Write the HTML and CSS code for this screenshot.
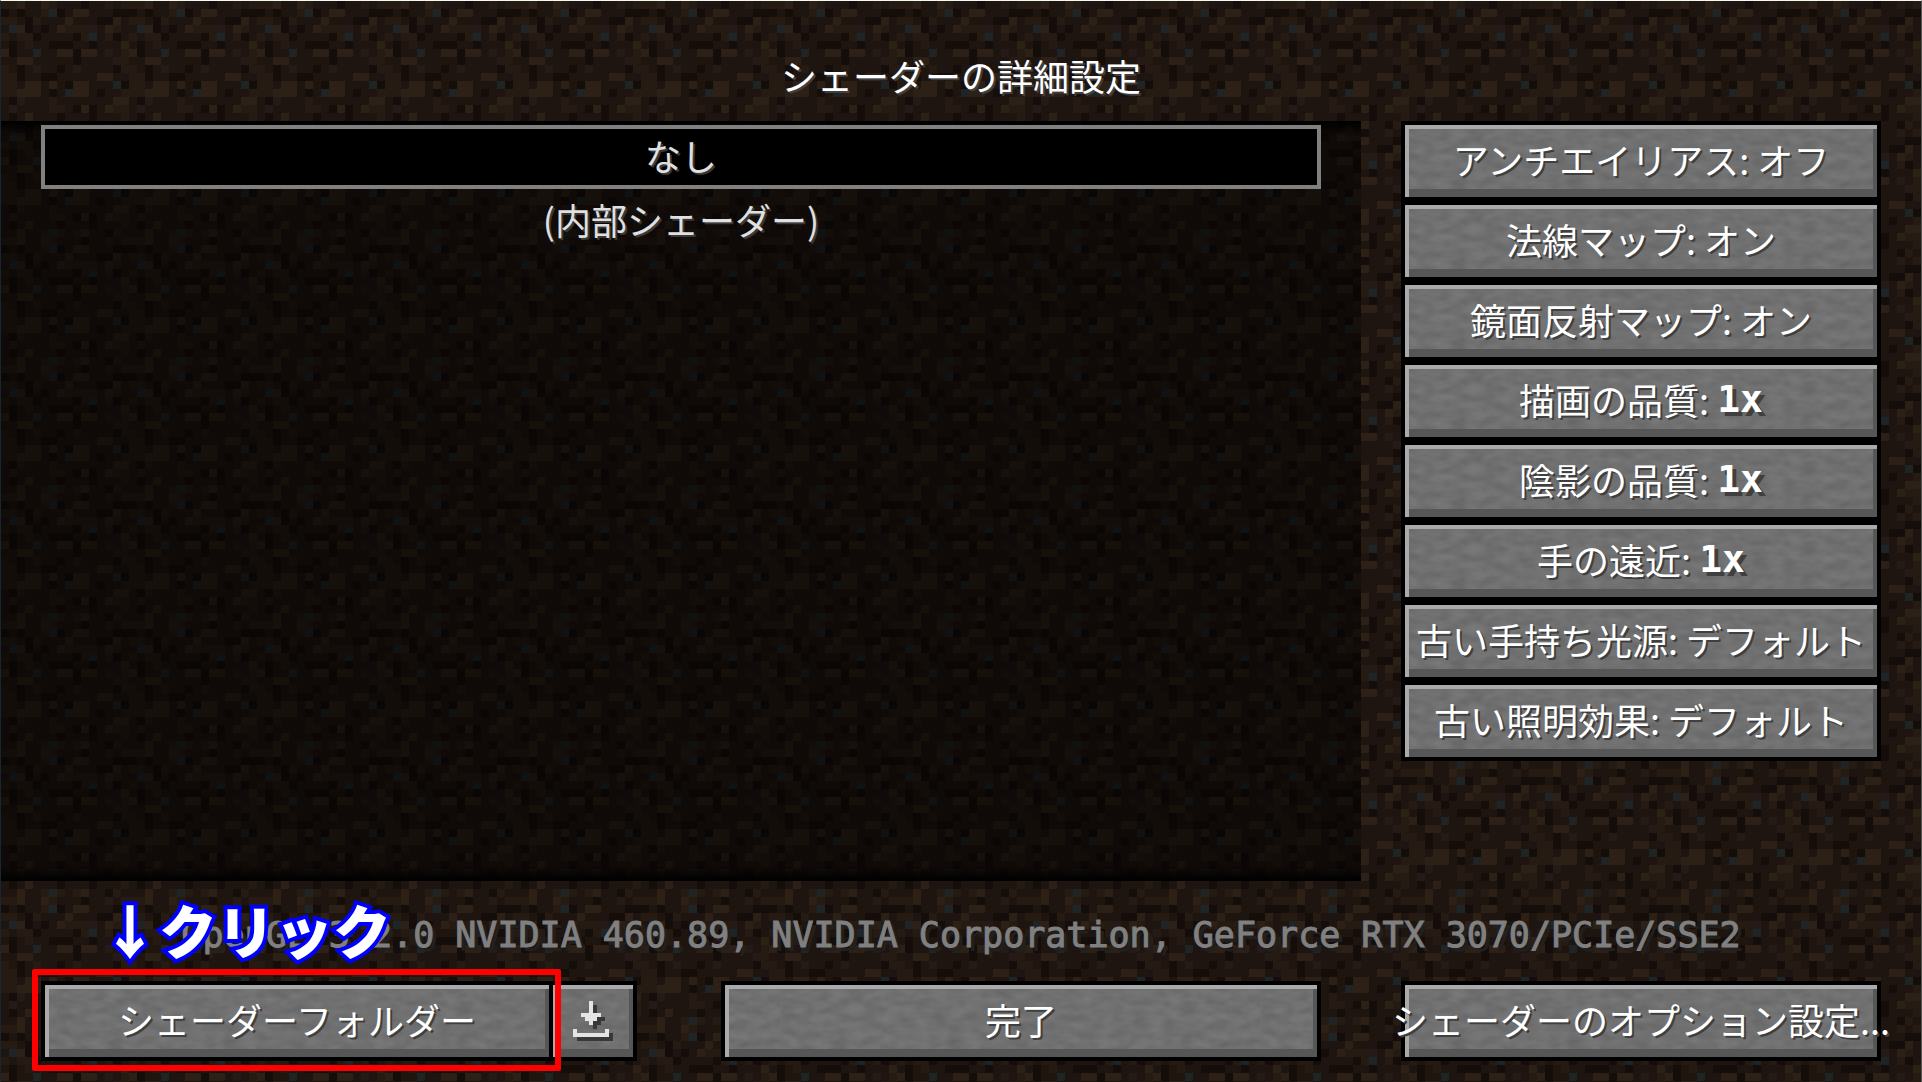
FILE: index.html
```html
<!DOCTYPE html>
<html lang="ja">
<head>
    <meta charset="UTF-8">
    <meta name="viewport" content="width=device-width, initial-scale=1.0">
    <title>シェーダーの詳細設定</title>
    <link rel="stylesheet" href="styles.css">
</head>
<body>
    <div class="screen">
        <header class="header">
            <h1>シェーダーの詳細設定</h1>
        </header>

        <main class="main">
            <div class="shader-list">
                <button type="button" class="shader selected">なし</button>
                <button type="button" class="shader">(内部シェーダー)</button>
            </div>
            <div class="options">
                <button type="button" class="btn">アンチエイリアス: オフ</button>
                <button type="button" class="btn">法線マップ: オン</button>
                <button type="button" class="btn">鏡面反射マップ: オン</button>
                <button type="button" class="btn">描画の品質: <b>1x</b></button>
                <button type="button" class="btn">陰影の品質: <b>1x</b></button>
                <button type="button" class="btn">手の遠近: <b>1x</b></button>
                <button type="button" class="btn">古い手持ち光源: デフォルト</button>
                <button type="button" class="btn">古い照明効果: デフォルト</button>
            </div>
        </main>

        <footer class="footer">
            <p class="status">OpenGL 3.2.0 NVIDIA 460.89, NVIDIA Corporation, GeForce RTX 3070/PCIe/SSE2</p>
            <div class="actions">
                <div class="folder">
                    <button type="button" class="btn btn-folder">シェーダーフォルダー</button>
                    <button type="button" class="btn btn-download" aria-label="ダウンロード">
                        <svg width="40" height="40" viewBox="0 0 10 10" shape-rendering="crispEdges">
                            <path fill="#383838" transform="translate(1 1)" d="M4 0h1v3h2v1h-1v1h-1v1h-1v-1h-1v-1h-1v-1h2zM0 7h1v1h7v-1h1v2h-9z"/>
                            <path fill="#e4e4e4" d="M4 0h1v3h2v1h-1v1h-1v1h-1v-1h-1v-1h-1v-1h2zM0 7h1v1h7v-1h1v2h-9z"/>
                        </svg>
                    </button>
                    <div class="mark"></div>
                    <div class="mark-label">↓クリック</div>
                </div>
                <button type="button" class="btn">完了</button>
                <button type="button" class="btn">シェーダーのオプション設定...</button>
            </div>
        </footer>
    </div>
</body>
</html>
```

FILE: styles.css
```css
:root {
    /* 16x16 dirt tile, one path per colour */
    --dirt: url("data:image/svg+xml,%3Csvg xmlns='http://www.w3.org/2000/svg' width='128' height='128' viewBox='0 0 16 16' shape-rendering='crispEdges'%3E%3Cpath fill='%231f1510' d='M0 0h16v16H0z'/%3E%3Cg fill='none' stroke-width='1'%3E%3Cpath stroke='%23261b12' d='M0 .5h2M6 .5h1M13 .5h1M15 .5h1M5 1.5h1M0 2.5h2M4 2.5h1M8 3.5h3M14 3.5h1M0 4.5h1M2 4.5h2M10 4.5h1M13 4.5h1M3 5.5h1M15 6.5h1M15 7.5h1M0 8.5h1M4 8.5h1M9 8.5h1M15 8.5h1M0 9.5h2M0 10.5h2M0 11.5h2M15 11.5h1M6 12.5h1M6 13.5h2M14 13.5h2M15 14.5h1M5 15.5h1M7 15.5h1M9 15.5h1M14 15.5h1'/%3E%3Cpath stroke='%232d2016' d='M2 .5h1M5 .5h1M9 1.5h2M8 2.5h1M14 2.5h1M2 3.5h1M7 3.5h1M13 3.5h1M15 5.5h1M0 6.5h1M7 6.5h2M10 6.5h2M2 7.5h2M12 9.5h2M3 10.5h2M6 10.5h1M9 10.5h2M2 11.5h3M9 11.5h2M14 12.5h2M10 13.5h1M13 13.5h1M3 14.5h1M2 15.5h1M10 15.5h1'/%3E%3Cpath stroke='%23150d0a' d='M10 .5h1M0 1.5h1M2 1.5h1M7 1.5h1M14 1.5h2M3 2.5h1M12 2.5h2M3 3.5h1M5 3.5h1M4 4.5h1M9 4.5h1M14 4.5h1M1 5.5h1M6 5.5h3M11 5.5h1M1 6.5h1M9 6.5h1M9 7.5h1M2 8.5h1M7 8.5h1M14 8.5h1M2 9.5h1M5 9.5h2M8 10.5h1M15 10.5h1M6 11.5h1M12 11.5h1M1 12.5h1M9 13.5h1M11 13.5h1M1 14.5h1M7 14.5h1M11 14.5h1M13 15.5h1'/%3E%3Cpath stroke='%23251a17' d='M11 3.5h1M13 6.5h1M14 7.5h1M2 12.5h1M1 13.5h1'/%3E%3Cpath stroke='%231f2427' d='M6 1.5h1M1 3.5h1M11 4.5h1M4 6.5h1M14 10.5h1M8 11.5h1M6 15.5h1'/%3E%3C/g%3E%3C/svg%3E");
    /* soft grey noise for the button faces */
    --stone: url("data:image/svg+xml,%3Csvg xmlns='http://www.w3.org/2000/svg' width='480' height='80'%3E%3Cfilter id='n' x='0' y='0' width='1' height='1' color-interpolation-filters='sRGB'%3E%3CfeTurbulence type='fractalNoise' baseFrequency='.06 .12' numOctaves='2' seed='4'/%3E%3CfeColorMatrix values='.1 0 0 0 .39 .1 0 0 0 .39 .1 0 0 0 .39 0 0 0 0 1'/%3E%3C/filter%3E%3Crect width='480' height='80' filter='url(%23n)'/%3E%3C/svg%3E");
}
* {
    box-sizing: border-box;
}
body {
    margin: 0;
    background-color: #1f1510;
    font-family: "Noto Sans CJK JP", sans-serif;
    font-size: 36px;
    color: #fff;
}
.screen {
    display: flex;
    flex-direction: column;
    min-height: 100vh;
    border-top: 1px solid #f4f8f4;
    border-left: 1px solid #1b2530;
    border-right: 1px solid #555;
    background: var(--dirt);
    overflow: hidden;
}
.header {
    height: 120px;
    padding-top: 34px;
}
h1 {
    margin: 0;
    font-size: 36px;
    font-weight: normal;
    line-height: 80px;
    text-align: center;
    text-shadow: 2px 2px #3f3f3f;
}
.main {
    flex: 1;
    display: flex;
    gap: 40px;
    padding-right: 40px;
}
.shader-list {
    flex: 1;
    padding: 4px 40px;
    background:
        linear-gradient(#000, transparent) top / 100% 16px no-repeat,
        linear-gradient(transparent, #000) bottom / 100% 16px no-repeat,
        linear-gradient(rgba(0, 0, 0, 0.5), rgba(0, 0, 0, 0.5)),
        var(--dirt) 0 -12px;
}
.shader {
    display: block;
    width: 100%;
    height: 64px;
    padding: 0 0 4px;
    border: 4px solid transparent;
    background: none;
    color: #e0e0e0;
    font: inherit;
    line-height: 52px;
    text-shadow: 2px 2px #383838;
    cursor: pointer;
}
.shader.selected {
    border-color: #808080;
    background-color: #000;
}
.options {
    width: 480px;
}
.btn {
    display: flex;
    align-items: center;
    justify-content: center;
    width: 100%;
    height: 80px;
    padding: 0 0 4px;
    border: 4px solid #000;
    background: var(--stone) center;
    box-shadow:
        inset 0 4px #aaa,
        inset 4px 0 #aaa,
        inset -4px -8px #565656;
    color: #fff;
    font: inherit;
    line-height: 68px;
    white-space: pre;
    text-shadow: 2px 2px #3f3f3f;
    cursor: pointer;
}
.btn b {
    font-family: "DejaVu Sans Mono", monospace;
    font-size: 38px;
    text-shadow: 4px 4px #3f3f3f;
}
.status {
    margin: 0;
    height: 100px;
    color: #808080;
    font-family: "DejaVu Sans Mono", monospace;
    font-size: 35px;
    line-height: 108px;
    text-align: center;
    white-space: nowrap;
    text-shadow: 4px 4px #202020;
    -webkit-text-stroke: 1px #808080;
}
.actions {
    display: grid;
    grid-template-columns: 600px 1fr 480px;
    column-gap: 80px;
    padding: 0 40px 21px;
}
.folder {
    position: relative;
    display: flex;
}
.btn-folder {
    width: 512px;
}
.btn-download {
    width: 88px;
    margin-left: -4px;
    padding: 0;
}
/* red frame and note over the folder button */
.mark {
    position: absolute;
    top: -12px;
    left: -9px;
    width: 529px;
    height: 102px;
    border: 6px solid #f00;
    border-radius: 2px;
    pointer-events: none;
}
.mark-label {
    position: absolute;
    left: 60px;
    bottom: 102px;
    font-size: 58px;
    font-weight: 900;
    line-height: 60px;
    white-space: nowrap;
    -webkit-text-stroke: 8px #00f;
    paint-order: stroke fill;
    pointer-events: none;
}
```
